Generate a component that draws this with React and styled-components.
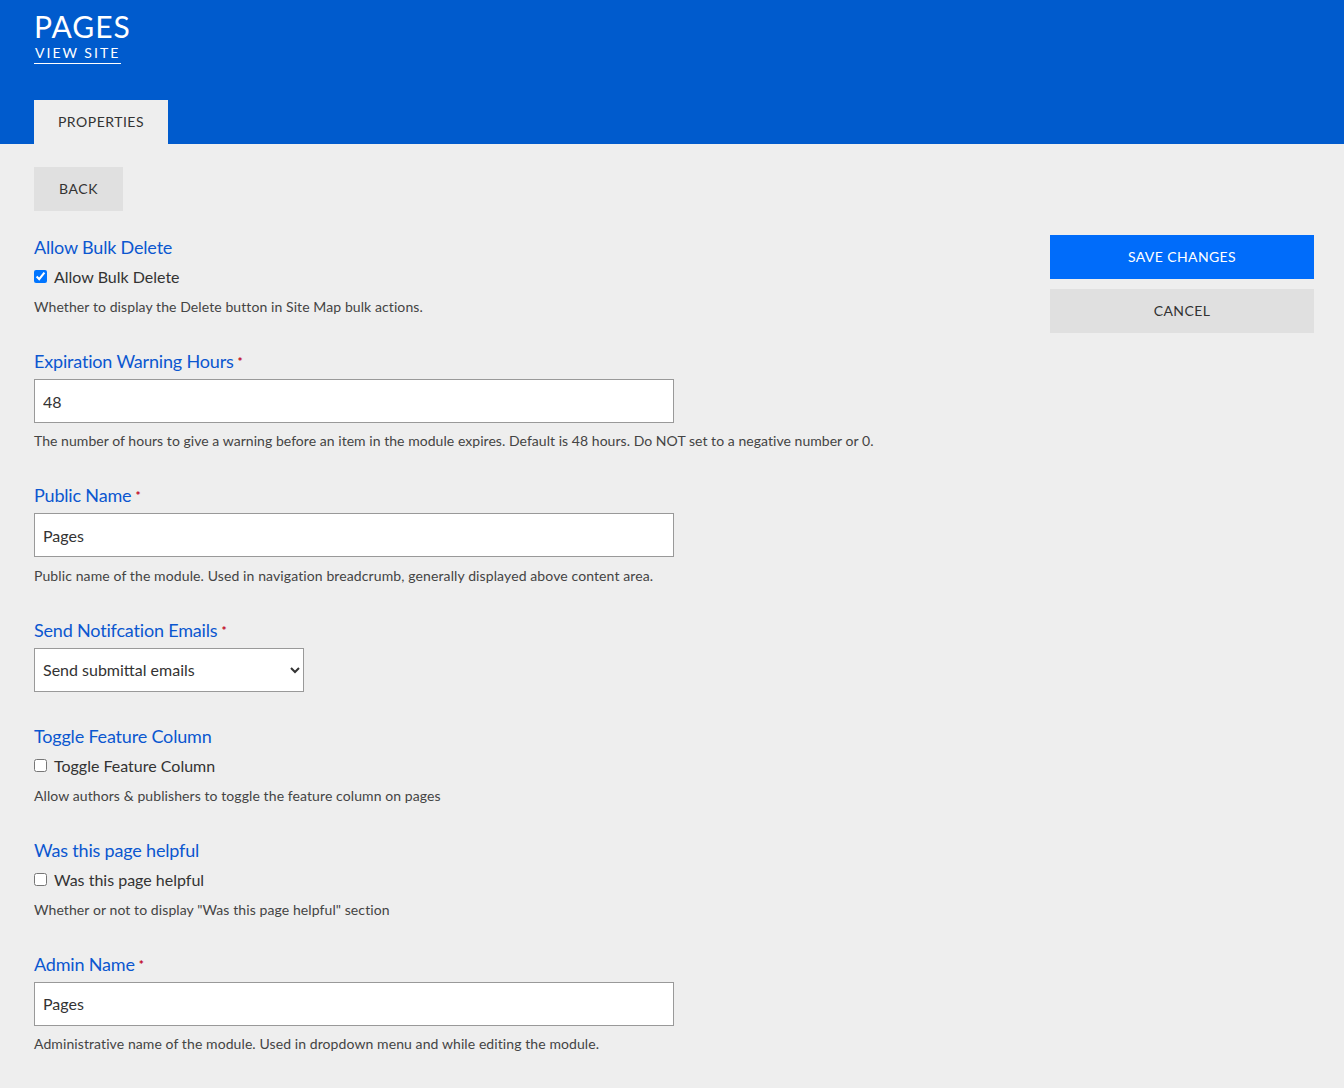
import React from 'react';
import styled, { createGlobalStyle } from 'styled-components';

const GlobalStyle = createGlobalStyle`
  body {
    margin: 0;
    background: #eeeeee;
    font-family: 'Lato', 'Liberation Sans', sans-serif;
    color: #333;
  }
`;

const Header = styled.header`
  height: 144px;
  background: #005bcd;
  padding: 0 34px;
  box-sizing: border-box;
  display: flex;
  flex-direction: column;
`;

const Title = styled.h1`
  margin: 8px 0 0;
  font-size: 30px;
  line-height: 36px;
  font-weight: 400;
  letter-spacing: 1px;
  color: #fff;
`;

const ViewSite = styled.a`
  align-self: flex-start;
  font-size: 14px;
  line-height: 17px;
  letter-spacing: 2px;
  color: #fff;
  padding: 0 1px 2px 1px;
  border-bottom: 1px solid #fff;
`;

const Tabs = styled.nav`
  margin-top: auto;
  display: flex;
`;

const Tab = styled.div`
  width: 134px;
  height: 44px;
  box-sizing: border-box;
  padding-bottom: 2px;
  background: #eeeeee;
  display: flex;
  align-items: center;
  justify-content: center;
  font-size: 14px;
  letter-spacing: 0.5px;
  color: #333;
`;

const Main = styled.main`
  padding: 23px 30px 0 34px;
  display: flex;
  flex-direction: column;
`;

const BackButton = styled.button`
  width: 89px;
  height: 44px;
  border: 0;
  background: #e0e0e0;
  font-family: inherit;
  font-size: 14px;
  letter-spacing: 0.6px;
  color: #333;
  padding: 0 0 2px;
`;

const Columns = styled.div`
  margin-top: 24px;
  display: flex;
  justify-content: space-between;
  align-items: flex-start;
`;

const FormColumn = styled.div`
  display: flex;
  flex-direction: column;
`;

const Field = styled.div`
  margin-bottom: 32px;
`;

const Label = styled.div`
  font-size: 18px;
  line-height: 24px;
  letter-spacing: -0.18px;
  margin-bottom: 6px;
  color: #0b57d0;
`;

const Required = styled.span`
  color: #c00020;
  font-size: 12px;
  font-weight: 700;
  line-height: 0;
  letter-spacing: 0;
  margin-left: 4px;
  vertical-align: 2px;
`;

const TextInput = styled.input`
  display: block;
  box-sizing: border-box;
  width: 640px;
  height: 44px;
  padding: 0 8px;
  margin-bottom: 8.4px;
  border: 1px solid #999;
  border-radius: 0;
  background: #fff;
  font-family: inherit;
  font-size: 16px;
  color: #333;
`;

const Dropdown = styled.select`
  display: block;
  box-sizing: border-box;
  width: 270px;
  height: 44px;
  padding: 0 5px 1px 4px;
  border: 1px solid #999;
  border-radius: 0;
  background: #fff;
  font-family: inherit;
  font-size: 16px;
  color: #333;
`;

const CheckRow = styled.label`
  display: flex;
  align-items: center;
  height: 22.625px;
  margin-bottom: 9.375px;
  font-size: 16px;
  color: #333;

  input {
    width: 13px;
    height: 13px;
    margin: 0 7px 0 0;
  }
`;

const Help = styled.div`
  font-size: 14px;
  line-height: 20px;
  letter-spacing: ${(p) => p.$spacing || '0.09px'};
  color: #444;
`;

const Actions = styled.aside`
  width: 264px;
  display: flex;
  flex-direction: column;
  gap: 10px;
`;

const ActionButton = styled.button`
  height: 44px;
  border: 0;
  padding: 0 0 2px;
  background: ${(p) => (p.$primary ? '#006cfa' : '#e0e0e0')};
  color: ${(p) => (p.$primary ? '#fff' : '#333')};
  font-family: inherit;
  font-size: 14px;
  letter-spacing: 0.4px;
`;

const CheckField = ({ title, help, checked }) => (
  <Field>
    <Label>{title}</Label>
    <CheckRow>
      <input type="checkbox" defaultChecked={checked} />
      {title}
    </CheckRow>
    <Help>{help}</Help>
  </Field>
);

const InputField = ({ title, value, help, helpSpacing }) => (
  <Field>
    <Label>
      {title}
      <Required>*</Required>
    </Label>
    <TextInput defaultValue={value} />
    <Help $spacing={helpSpacing}>{help}</Help>
  </Field>
);

const App = () => (
  <>
    <GlobalStyle />
    <Header>
      <Title>PAGES</Title>
      <ViewSite>VIEW SITE</ViewSite>
      <Tabs>
        <Tab>PROPERTIES</Tab>
      </Tabs>
    </Header>
    <Main>
      <div>
        <BackButton>BACK</BackButton>
      </div>
      <Columns>
        <FormColumn>
          <CheckField
            title="Allow Bulk Delete"
            checked
            help="Whether to display the Delete button in Site Map bulk actions."
          />
          <InputField
            title="Expiration Warning Hours"
            value="48"
            helpSpacing="0.045px"
            help="The number of hours to give a warning before an item in the module expires. Default is 48 hours. Do NOT set to a negative number or 0."
          />
          <InputField
            title="Public Name"
            value="Pages"
            helpSpacing="0.11px"
            help="Public name of the module. Used in navigation breadcrumb, generally displayed above content area."
          />
          <Field>
            <Label>
              Send Notifcation Emails
              <Required>*</Required>
            </Label>
            <Dropdown defaultValue="submittal">
              <option value="submittal">Send submittal emails</option>
            </Dropdown>
          </Field>
          <CheckField
            title="Toggle Feature Column"
            help="Allow authors & publishers to toggle the feature column on pages"
          />
          <CheckField
            title="Was this page helpful"
            help={'Whether or not to display "Was this page helpful" section'}
          />
          <InputField
            title="Admin Name"
            value="Pages"
            help="Administrative name of the module. Used in dropdown menu and while editing the module."
          />
        </FormColumn>
        <Actions>
          <ActionButton $primary>SAVE CHANGES</ActionButton>
          <ActionButton>CANCEL</ActionButton>
        </Actions>
      </Columns>
    </Main>
  </>
);

export default App;
